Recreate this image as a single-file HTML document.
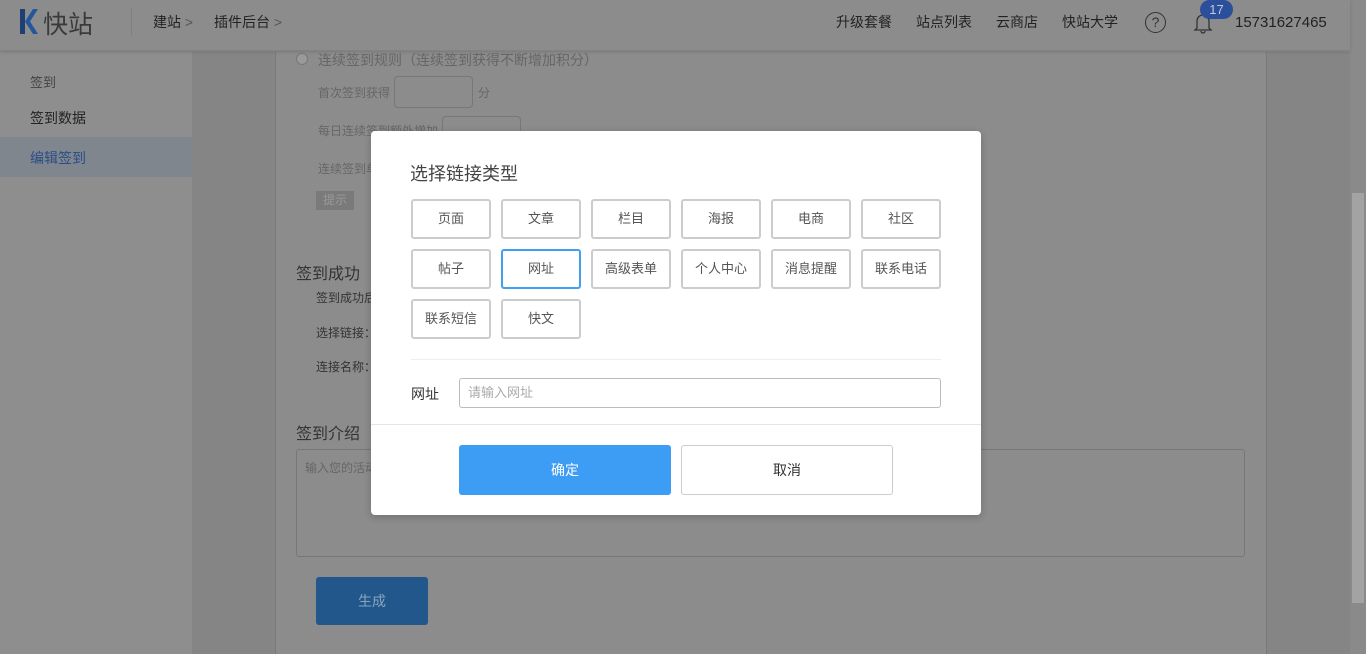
<!DOCTYPE html>
<html><head><meta charset="utf-8"><style>
*{margin:0;padding:0;box-sizing:border-box}
body{width:1366px;height:654px;overflow:hidden;position:relative;background:#8c8c8c;font-family:"Liberation Sans","Noto Sans CJK SC",sans-serif;color:#333}
.a{position:absolute}
.hdr{left:0;top:0;width:1350px;height:51px;background:#8c8c8c;border-bottom:1px solid #828282;box-shadow:0 1px 3px rgba(0,0,0,.15)}
.t{position:absolute;white-space:nowrap}
.btn{position:absolute;width:80px;height:40px;border:2px solid #ccc;border-radius:3px;font-size:13px;color:#555;text-align:center;line-height:36px;background:#fff}
</style></head><body>
<div class="a" style="left:0;top:52px;width:192px;height:602px;background:#8e8e8e"></div>
<div class="a" style="left:192px;top:52px;width:83px;height:602px;background:#858585"></div>
<div class="a" style="left:275px;top:52px;width:1px;height:602px;background:#7a7a7a"></div>
<div class="a" style="left:1266px;top:52px;width:1px;height:602px;background:#7a7a7a"></div>
<div class="a" style="left:1267px;top:52px;width:83px;height:602px;background:#858585"></div>
<div class="a" style="left:1350px;top:0;width:16px;height:654px;background:#8a8a8a"></div>
<div class="a" style="left:1352px;top:193px;width:12px;height:410px;background:#a3a3a3"></div>
<div class="a" style="left:0;top:137px;width:192px;height:40px;background:#7f868d"></div>
<div class="t" style="left:30px;top:72px;font-size:13px;color:#444">签到</div>
<div class="t" style="left:30px;top:108px;font-size:14px;color:#222">签到数据</div>
<div class="t" style="left:30px;top:148px;font-size:14px;color:#2b4d86">编辑签到</div>

<div class="hdr a"></div>
<svg class="a" style="left:20px;top:9px" width="18" height="25" viewBox="0 0 18 25"><path d="M0 0h5v25H0z" fill="#1d3f73"/><path d="M5 12.5L13 0h5L10 12.5 18 25h-5z" fill="#24579a"/></svg>
<div class="t" style="left:43px;top:5px;font-size:25px;color:#3a3a3a">快站</div>
<div class="a" style="left:131px;top:8px;width:1px;height:28px;background:#7f7f7f"></div>
<div class="t" style="left:153px;top:12px;font-size:14px;color:#222">建站 <span style="color:#555">&gt;</span></div>
<div class="t" style="left:214px;top:12px;font-size:14px;color:#222">插件后台 <span style="color:#555">&gt;</span></div>
<div class="t" style="left:836px;top:12px;font-size:14px;color:#222">升级套餐</div>
<div class="t" style="left:916px;top:12px;font-size:14px;color:#222">站点列表</div>
<div class="t" style="left:996px;top:12px;font-size:14px;color:#222">云商店</div>
<div class="t" style="left:1062px;top:12px;font-size:14px;color:#222">快站大学</div>
<div class="a" style="left:1145px;top:12px;width:21px;height:21px;border:1px solid #333;border-radius:50%;font-size:14px;text-align:center;line-height:19px;color:#333">?</div>
<svg class="a" style="left:1193px;top:12px" width="20" height="22" viewBox="0 0 20 22"><path d="M4 16V9a6 6 0 0 1 12 0v7l2 2H2z M8 19a2 2 0 0 0 4 0" fill="none" stroke="#333" stroke-width="1.3"/></svg>
<div class="a" style="left:1200px;top:0;width:33px;height:19px;background:#2b4f9a;border-radius:10px;color:#bfc9dd;font-size:13px;text-align:center;line-height:19px">17</div>
<div class="t" style="left:1235px;top:14px;font-size:15px;color:#222">15731627465</div>

<div class="a" style="left:296px;top:53px;width:12px;height:12px;border-radius:50%;background:#9a9a9a;border:1px solid #777"></div>
<div class="t" style="left:318px;top:50px;font-size:14px;color:#666">连续签到规则（连续签到获得不断增加积分）</div>
<div class="t" style="left:318px;top:84px;font-size:12px;color:#666">首次签到获得</div>
<div class="a" style="left:394px;top:76px;width:79px;height:32px;border:1px solid #777;border-radius:4px"></div>
<div class="t" style="left:478px;top:84px;font-size:12px;color:#666">分</div>
<div class="t" style="left:318px;top:122px;font-size:12px;color:#666">每日连续签到额外增加</div>
<div class="a" style="left:442px;top:116px;width:79px;height:32px;border:1px solid #777;border-radius:4px"></div>
<div class="t" style="left:318px;top:160px;font-size:12px;color:#666">连续签到单</div>
<div class="a" style="left:316px;top:191px;width:38px;height:19px;background:#7a7a7a;color:#999;font-size:12px;text-align:center;line-height:19px">提示</div>
<div class="t" style="left:296px;top:260px;font-size:16px;color:#333">签到成功</div>
<div class="t" style="left:316px;top:289px;font-size:12px;color:#333">签到成功后</div>
<div class="t" style="left:316px;top:324px;font-size:12px;color:#333">选择链接：</div>
<div class="t" style="left:316px;top:358px;font-size:12px;color:#333">连接名称：</div>
<div class="t" style="left:296px;top:420px;font-size:16px;color:#333">签到介绍</div>
<div class="a" style="left:296px;top:449px;width:949px;height:108px;border:1px solid #777;border-radius:3px"></div>
<div class="t" style="left:305px;top:459px;font-size:12px;color:#666">输入您的活动</div>
<div class="a" style="left:316px;top:577px;width:112px;height:48px;background:#21578a;border-radius:3px;color:#8aa4bf;font-size:14px;text-align:center;line-height:48px">生成</div>

<div class="a" style="left:371px;top:131px;width:610px;height:384px;background:#fff;border-radius:4px;box-shadow:0 2px 8px rgba(0,0,0,.2)">
<div class="t" style="left:39px;top:29px;font-size:18px;color:#444">选择链接类型</div>
<div class="btn" style="left:40px;top:68px">页面</div>
<div class="btn" style="left:130px;top:68px">文章</div>
<div class="btn" style="left:220px;top:68px">栏目</div>
<div class="btn" style="left:310px;top:68px">海报</div>
<div class="btn" style="left:400px;top:68px">电商</div>
<div class="btn" style="left:490px;top:68px">社区</div>
<div class="btn" style="left:40px;top:118px">帖子</div>
<div class="btn" style="left:130px;top:118px;border-color:#42a0f0">网址</div>
<div class="btn" style="left:220px;top:118px">高级表单</div>
<div class="btn" style="left:310px;top:118px">个人中心</div>
<div class="btn" style="left:400px;top:118px">消息提醒</div>
<div class="btn" style="left:490px;top:118px">联系电话</div>
<div class="btn" style="left:40px;top:168px">联系短信</div>
<div class="btn" style="left:130px;top:168px">快文</div>
<div class="a" style="left:40px;top:228px;width:530px;height:1px;background:#eee"></div>
<div class="t" style="left:40px;top:253px;font-size:14px;color:#333">网址</div>
<div class="a" style="left:88px;top:247px;width:482px;height:30px;border:1px solid #bbb;border-radius:3px;font-size:13px;color:#aaa;padding-left:8px;line-height:28px">请输入网址</div>
<div class="a" style="left:0;top:293px;width:610px;height:1px;background:#e5e5e5"></div>
<div class="a" style="left:88px;top:314px;width:212px;height:50px;background:#3d9cf3;border-radius:3px;color:#fff;font-size:14px;text-align:center;line-height:50px">确定</div>
<div class="a" style="left:310px;top:314px;width:212px;height:50px;border:1px solid #ccc;border-radius:3px;color:#333;font-size:14px;text-align:center;line-height:48px">取消</div>
</div>
</body></html>
